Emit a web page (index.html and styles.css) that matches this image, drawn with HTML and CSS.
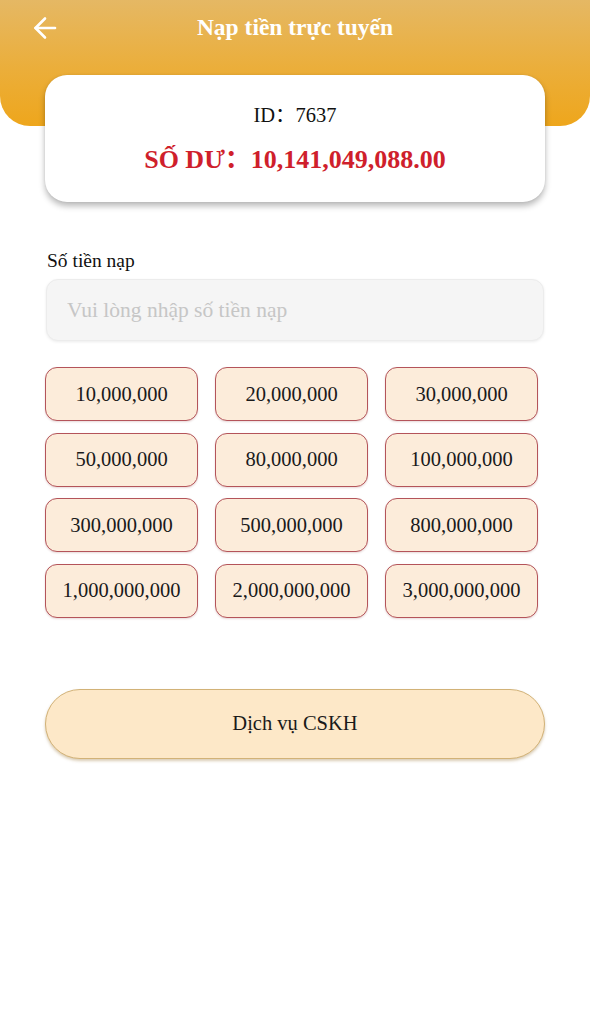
FILE: index.html
```html
<!DOCTYPE html>
<html lang="vi">
<head>
<meta charset="utf-8">
<title>Nạp tiền trực tuyến</title>
<link rel="stylesheet" href="styles.css">
</head>
<body>
<div class="page">
  <header class="header">
    <button class="back" aria-label="Quay lại">
      <svg width="26" height="26" viewBox="0 0 26 26" fill="none" stroke="#fff" stroke-width="2.6" stroke-linecap="round" stroke-linejoin="round">
        <path d="M23 13H3.5"/>
        <path d="M13 3.5L3.5 13L13 22.5"/>
      </svg>
    </button>
    <h1 class="title">Nạp tiền trực tuyến</h1>
  </header>

  <section class="card">
    <div class="card-id">ID：7637</div>
    <div class="card-balance">SỐ DƯ：10,141,049,088.00</div>
  </section>

  <main class="content">
    <label class="label" for="amount">Số tiền nạp</label>
    <input id="amount" class="input" type="text" placeholder="Vui lòng nhập số tiền nạp">

    <div class="grid">
      <button class="amount">10,000,000</button>
      <button class="amount">20,000,000</button>
      <button class="amount">30,000,000</button>
      <button class="amount">50,000,000</button>
      <button class="amount">80,000,000</button>
      <button class="amount">100,000,000</button>
      <button class="amount">300,000,000</button>
      <button class="amount">500,000,000</button>
      <button class="amount">800,000,000</button>
      <button class="amount">1,000,000,000</button>
      <button class="amount">2,000,000,000</button>
      <button class="amount">3,000,000,000</button>
    </div>

    <button class="service">Dịch vụ CSKH</button>
  </main>
</div>
</body>
</html>
```

FILE: styles.css
```css
* { box-sizing: border-box; }

html, body {
  margin: 0;
  padding: 0;
  background: #ffffff;
}

body {
  font-family: "Liberation Serif", "Times New Roman", "Noto Sans CJK SC", serif;
  color: #111;
}

.page {
  width: 590px;
  min-height: 1024px;
  background: #fff;
}

.header {
  position: relative;
  height: 126px;
  background: linear-gradient(180deg, #e5b864 0%, #ebae3a 55%, #eea61c 100%);
  border-radius: 0 0 30px 30px;
  display: flex;
  justify-content: center;
  padding-top: 11px;
}

.back {
  position: absolute;
  left: 30px;
  top: 14px;
  width: 30px;
  height: 28px;
  padding: 0;
  border: 0;
  background: none;
  display: flex;
  align-items: center;
  justify-content: center;
}

.title {
  margin: 0;
  font-size: 23.5px;
  line-height: 32px;
  font-weight: bold;
  color: #fff;
}

.card {
  margin: -51px 45px 0;
  height: 127px;
  background: #fff;
  border-radius: 22px;
  box-shadow: 0 4px 6px rgba(0, 0, 0, 0.28), 0 0 2px rgba(0, 0, 0, 0.08);
  display: flex;
  flex-direction: column;
  align-items: center;
  padding-top: 26px;
  position: relative;
}

.card-id {
  font-size: 20.5px;
  line-height: 28px;
  color: #111;
}

.card-balance {
  margin-top: 15px;
  font-size: 26px;
  line-height: 32px;
  font-weight: bold;
  color: #cf1f2c;
}

.content {
  padding: 47px 45px 0 45px;
  display: flex;
  flex-direction: column;
}

.label {
  margin-left: 2px;
  font-size: 19.5px;
  line-height: 24px;
  color: #111;
}

.input {
  margin-top: 6px;
  margin-left: 1px;
  width: 498px;
  height: 62px;
  border: 1px solid #ececec;
  border-radius: 12px;
  background: #f5f5f5;
  box-shadow: 0 1px 3px rgba(0, 0, 0, 0.08);
  padding: 0 20px;
  font-family: inherit;
  font-size: 21.5px;
  color: #111;
  outline: none;
}

.input::placeholder {
  color: #c6c6c6;
}

.grid {
  margin-top: 26px;
  display: grid;
  grid-template-columns: repeat(3, 153px);
  column-gap: 17px;
  row-gap: 11.5px;
}

.amount {
  height: 54px;
  border: 1px solid #b4545a;
  border-radius: 12px;
  background: #fcecda;
  box-shadow: 0 1px 2px rgba(120, 40, 40, 0.18);
  font-family: inherit;
  font-size: 20.5px;
  color: #1a1a1a;
  padding: 0;
}

.service {
  margin-top: 71px;
  height: 70px;
  width: 500px;
  border: 1px solid #d2b277;
  border-radius: 35px;
  background: #fde8c8;
  box-shadow: 0 2px 3px rgba(150, 110, 40, 0.35);
  font-family: inherit;
  font-size: 20.5px;
  color: #1a1a1a;
  padding: 0;
}
```
